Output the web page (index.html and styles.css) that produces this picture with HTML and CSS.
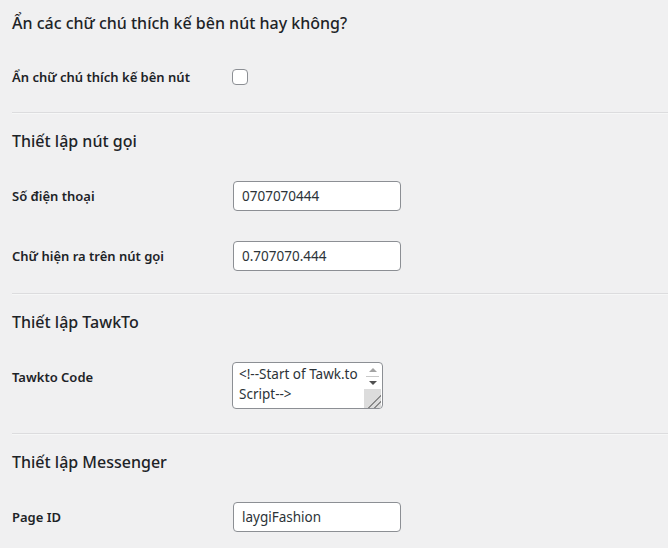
FILE: index.html
```html
<!DOCTYPE html>
<html lang="vi">

<head>
    <meta charset="UTF-8">
    <meta name="viewport" content="width=device-width, initial-scale=1.0">
    <title>Cài đặt nút gọi</title>
    <link rel="stylesheet" href="styles.css">
</head>

<body>
    <div class="wrap">
        <div class="section first">
            <h2>Ẩn các chữ chú thích kế bên nút hay không?</h2>
            <div class="row">
                <label for="hideText">Ẩn chữ chú thích kế bên nút</label>
                <input type="checkbox" id="hideText" name="hideText">
            </div>
        </div>
        <hr>

        <div class="section">
            <h2>Thiết lập nút gọi</h2>
            <div class="row">
                <label for="phone">Số điện thoại</label>
                <input type="text" id="phone" name="phone" value="0707070444">
            </div>
            <div class="row">
                <label for="phoneText">Chữ hiện ra trên nút gọi</label>
                <input type="text" id="phoneText" name="phoneText" value="0.707070.444">
            </div>
        </div>
        <hr>

        <div class="section">
            <h2>Thiết lập TawkTo</h2>
            <div class="row tall">
                <label for="tawkto">Tawkto Code</label>
                <div class="textbox">
                    <textarea id="tawkto" name="tawkto">&lt;!--Start of Tawk.to Script--&gt;
&lt;script type="text/javascript"&gt;</textarea>
                    <div class="scrollbar">
                        <span class="btn"><span class="arrow up"></span></span>
                        <span class="btn"><span class="arrow down"></span></span>
                        <span class="grip"></span>
                    </div>
                </div>
            </div>
        </div>
        <hr>

        <div class="section">
            <h2>Thiết lập Messenger</h2>
            <div class="row">
                <label for="pageId">Page ID</label>
                <input type="text" id="pageId" name="pageId" value="laygiFashion">
            </div>
        </div>
    </div>
</body>

</html>
```

FILE: styles.css
```css
body {
    margin: 0;
    background-color: #f0f0f1;
    color: #1d2327;
    font-family: "Noto Sans", "Open Sans", sans-serif;
    font-size: 13px;
}

.wrap {
    padding: 12px 0 0 12px;
}

h2 {
    margin: 0 0 14px 0;
    font-size: 16px;
    font-weight: 500;
    line-height: 22px;
}

.section {
    padding-top: 16px;
}

.section.first {
    padding-top: 0;
}

.row {
    display: flex;
    align-items: flex-start;
    padding: 15px 0;
}

.section.first .row {
    padding: 14px 0 13px 0;
}

.row.tall {
    padding-bottom: 17px;
}

label {
    width: 220px;
    flex-shrink: 0;
    font-size: 13px;
    font-weight: 600;
    line-height: 30px;
}

input[type="text"] {
    box-sizing: border-box;
    width: 168px;
    height: 30px;
    margin: 0 0 0 1px;
    padding: 0 8px;
    border: 1px solid #8c8f94;
    border-radius: 4px;
    background-color: #fff;
    color: #2c3338;
    font-family: inherit;
    font-size: 13.5px;
}

input[type="checkbox"] {
    appearance: none;
    box-sizing: border-box;
    width: 16px;
    height: 16px;
    margin: 7px 0 0 0;
    border: 1px solid #8c8f94;
    border-radius: 4px;
    background-color: #fff;
}

/* textarea with a drawn scrollbar (headless hides real ones) */
.textbox {
    display: flex;
    box-sizing: border-box;
    width: 151px;
    height: 47px;
    border: 1px solid #8c8f94;
    border-radius: 4px;
    background-color: #fff;
    overflow: hidden;
}

textarea {
    flex: 1;
    min-width: 0;
    margin: 0;
    padding: 1px 0 0 6px;
    border: 0;
    outline: none;
    resize: none;
    overflow: hidden;
    background: transparent;
    color: #2c3338;
    font-family: inherit;
    font-size: 13.5px;
    line-height: 20px;
}

.scrollbar {
    display: flex;
    flex-direction: column;
    width: 17px;
    flex-shrink: 0;
    margin-right: 1px;
}

.btn {
    display: flex;
    align-items: center;
    justify-content: center;
    height: 12px;
}

.btn:first-child {
    height: 13px;
    margin: 0 2px;
    border-bottom: 1px solid #c8c8c8;
}

.arrow {
    width: 0;
    height: 0;
    border-left: 4px solid transparent;
    border-right: 4px solid transparent;
}

.arrow.up {
    border-bottom: 4px solid #a3a3a3;
}

.arrow.down {
    border-top: 4px solid #505050;
}

.grip {
    flex: 1;
    background-color: #dcdcdc;
    background-image: linear-gradient(135deg, transparent 62%, #8a8a8a 62%, #8a8a8a 68%, transparent 68%, transparent 80%, #8a8a8a 80%, #8a8a8a 86%, transparent 86%);
}

hr {
    margin: 7px 0 0 0;
    border: 0;
    border-top: 1px solid #dcdcde;
    border-bottom: 1px solid #f6f7f7;
}
```
